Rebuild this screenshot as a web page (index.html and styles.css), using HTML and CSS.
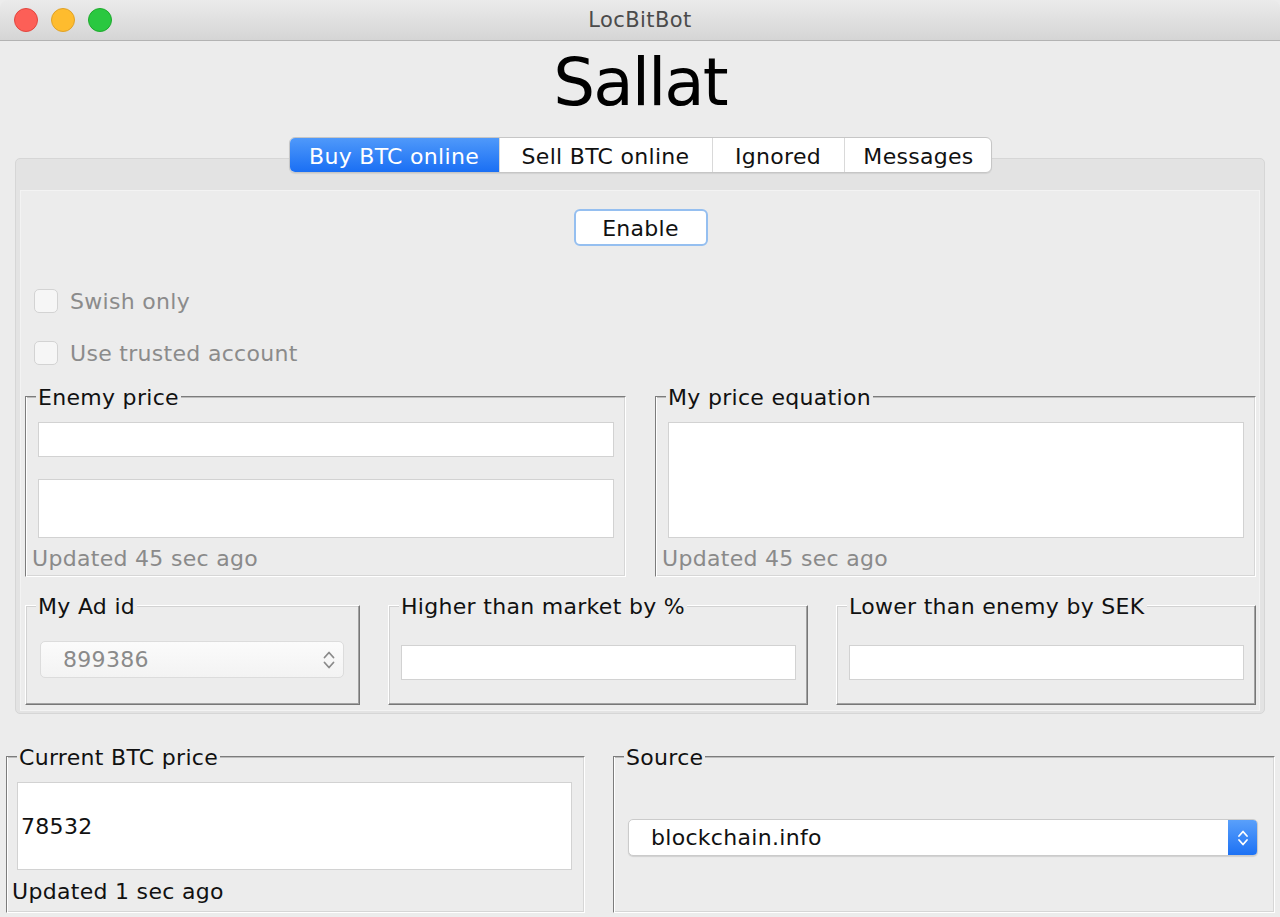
FILE: index.html
```html
<!DOCTYPE html>
<html lang="en">
<head>
<meta charset="utf-8">
<title>LocBitBot</title>
<link rel="stylesheet" href="styles.css">
</head>
<body>
<div class="window">
  <header class="titlebar">
    <div class="lights">
      <span class="light light--red"></span>
      <span class="light light--yellow"></span>
      <span class="light light--green"></span>
    </div>
    <div class="titlebar-text">LocBitBot</div>
  </header>

  <h1 class="app-title">Sallat</h1>

  <nav class="tabs">
    <div class="tab tab--active">Buy BTC online</div>
    <div class="tab">Sell BTC online</div>
    <div class="tab">Ignored</div>
    <div class="tab">Messages</div>
  </nav>

  <section class="tabpane">
    <div class="tabpage">
      <div class="enable-row">
        <button class="btn-enable" type="button">Enable</button>
      </div>

      <div class="checks">
        <label class="check"><span class="check-box"></span><span class="check-label">Swish only</span></label>
        <label class="check"><span class="check-box"></span><span class="check-label">Use trusted account</span></label>
      </div>

      <div class="group-row">
        <fieldset class="group group--lowered">
          <legend class="group-title">Enemy price</legend>
          <div class="field field--short"></div>
          <div class="field field--mid"></div>
          <div class="updated updated--muted">Updated 45 sec ago</div>
        </fieldset>
        <fieldset class="group group--lowered">
          <legend class="group-title">My price equation</legend>
          <div class="field field--tall"></div>
          <div class="updated updated--muted">Updated 45 sec ago</div>
        </fieldset>
      </div>

      <div class="param-row">
        <fieldset class="group group--raised group--combo">
          <legend class="group-title">My Ad id</legend>
          <div class="combo combo--disabled">
            <span class="combo-value">899386</span>
            <svg class="combo-arrows" width="14" height="24" viewBox="0 0 14 24">
              <path d="M2.5 9.5 L7 4.5 L11.5 9.5" fill="none" stroke="#8a8a8a" stroke-width="1.8" stroke-linecap="round" stroke-linejoin="round"/>
              <path d="M2.5 14.5 L7 19.5 L11.5 14.5" fill="none" stroke="#8a8a8a" stroke-width="1.8" stroke-linecap="round" stroke-linejoin="round"/>
            </svg>
          </div>
        </fieldset>
        <fieldset class="group group--raised group--input">
          <legend class="group-title">Higher than market by %</legend>
          <div class="field field--short"></div>
        </fieldset>
        <fieldset class="group group--raised group--input">
          <legend class="group-title">Lower than enemy by SEK</legend>
          <div class="field field--short"></div>
        </fieldset>
      </div>
    </div>
  </section>

  <div class="bottom-row">
    <fieldset class="group group--lowered group--price">
      <legend class="group-title">Current BTC price</legend>
      <div class="field field--price">78532</div>
      <div class="updated updated--dark">Updated 1 sec ago</div>
    </fieldset>
    <fieldset class="group group--lowered group--source">
      <legend class="group-title">Source</legend>
      <div class="combo combo--active">
        <span class="combo-value">blockchain.info</span>
        <span class="combo-button">
          <svg width="14" height="24" viewBox="0 0 14 24">
            <path d="M3 10 L7 5.5 L11 10" fill="none" stroke="#fff" stroke-width="1.8" stroke-linecap="round" stroke-linejoin="round"/>
            <path d="M3 14 L7 18.5 L11 14" fill="none" stroke="#fff" stroke-width="1.8" stroke-linecap="round" stroke-linejoin="round"/>
          </svg>
        </span>
      </div>
    </fieldset>
  </div>
</div>
</body>
</html>
```

FILE: styles.css
```css
* { box-sizing: border-box; }

html, body {
  margin: 0;
  padding: 0;
  background: #ececec;
}

body {
  font-family: "DejaVu Sans", "Liberation Sans", sans-serif;
  font-size: 22px;
  letter-spacing: 0.3px;
  color: #111;
}

.window {
  width: 1280px;
  height: 917px;
  overflow: hidden;
  background: #ececec;
}

/* ---------- title bar ---------- */
.titlebar {
  height: 41px;
  display: flex;
  align-items: center;
  justify-content: center;
  background: linear-gradient(#ebebeb, #d5d5d5);
  border-bottom: 1px solid #b3b3b3;
  border-radius: 8px 8px 0 0;
  position: relative;
}

.lights {
  position: absolute;
  left: 14px;
  top: 8px;
  display: flex;
  gap: 13px;
}

.light {
  width: 24px;
  height: 24px;
  border-radius: 50%;
  display: block;
}
.light--red { background: #fd5f57; border: 1px solid #e2463f; }
.light--yellow { background: #febc2e; border: 1px solid #e0a227; }
.light--green { background: #2ac840; border: 1px solid #1eaa2d; }

.titlebar-text {
  font-size: 21px;
  color: #4b4b4b;
  letter-spacing: 0.4px;
}

/* ---------- big title ---------- */
.app-title {
  margin: 0 0 12px 0;
  height: 84px;
  line-height: 84px;
  text-align: center;
  font-size: 66px;
  font-weight: normal;
  letter-spacing: -2px;
  color: #000;
}

/* ---------- tabs ---------- */
.tabs {
  position: relative;
  z-index: 1;
  display: grid;
  grid-template-columns: 209px 213px 132px 149px;
  width: 703px;
  height: 36px;
  margin: 0 auto -15px auto;
  background: #fff;
  border: 1px solid #c6c6c6;
  border-radius: 6px;
  box-shadow: 0 1px 1px rgba(0,0,0,0.08);
  overflow: hidden;
}

.tab {
  display: flex;
  align-items: center;
  justify-content: center;
  padding-top: 2px;
  color: #111;
  border-left: 1px solid #d9d9d9;
}
.tab:first-child { border-left: none; }

.tab--active {
  background: linear-gradient(#4f99fa, #1a6ff4);
  color: #fff;
}

/* ---------- tab pane ---------- */
.tabpane {
  margin: 0 15px;
  border: 1px solid #d6d6d6;
  border-radius: 5px;
  background: #e3e3e3;
  padding: 31px 4px 2px 4px;
}

.tabpage {
  background: #ececec;
  border: 1px solid #f3f3f3;
  padding: 18px 3px 5px 4px;
}

.enable-row {
  display: flex;
  justify-content: center;
}

.btn-enable {
  width: 134px;
  height: 37px;
  font-family: inherit;
  font-size: 22px;
  letter-spacing: 0.3px;
  color: #111;
  background: #fff;
  border: 2px solid #95bff0;
  border-radius: 6px;
  padding: 1px 0 0 0;
}

/* ---------- checkboxes ---------- */
.checks {
  margin: 43px 0 0 9px;
  display: flex;
  flex-direction: column;
  gap: 28px;
}

.check {
  display: flex;
  align-items: center;
  height: 24px;
  gap: 12px;
}

.check-box {
  width: 24px;
  height: 24px;
  border: 1px solid #d3d3d3;
  border-radius: 5px;
  background: #f6f6f6;
}

.check-label {
  color: #8b8b8b;
}

/* ---------- titled (etched) groups ---------- */
.group {
  --pl: 12px;
  margin: 0;
  min-width: 0;
  padding: 11px 11px 4px var(--pl);
}

.group--lowered {
  border-top: 1px solid #7c7c7c;
  border-left: 1px solid #7c7c7c;
  border-right: 1px solid #fff;
  border-bottom: 1px solid #fff;
  box-shadow: inset 1px 0 0 #fff, inset 0 1px 0 #bdbdbd, inset -1px -1px 0 #d6d6d6;
}

.group--raised {
  border-top: 1px solid #fff;
  border-left: 1px solid #fff;
  border-right: 1px solid #777;
  border-bottom: 1px solid #777;
  box-shadow: inset -1px -1px 0 #a2a2a2, inset 1px 1px 0 #d2d2d2;
}

.group-title {
  padding: 4px 2px 0 2px;
  margin-left: calc(10px - var(--pl));
  line-height: 26px;
  background: #ececec;
  color: #111;
}

.field {
  background: #fff;
  border: 1px solid #d2d2d2;
}

.field--short { height: 35px; }
.field--mid { height: 59px; margin-top: 22px; }
.field--tall { height: 116px; }

.updated {
  margin: 8px 0 0 -6px;
  line-height: 26px;
}
.updated--muted { color: #8a8a8a; }
.updated--dark { color: #111; margin: 9px 0 0 -5px; }

.group-row {
  margin-top: 16px;
  display: grid;
  grid-template-columns: 1fr 1fr;
  gap: 29px;
}

.param-row {
  margin-top: 13px;
  display: grid;
  grid-template-columns: 335px 1fr 1fr;
  gap: 28px;
}

.group--input { padding: 25px 11px 24px 12px; }
.group--combo { --pl: 14px; padding: 21px 15px 26px var(--pl); }

/* ---------- combo boxes ---------- */
.combo {
  height: 37px;
  display: flex;
  align-items: center;
  border-radius: 5px;
}

.combo--disabled {
  background: linear-gradient(#fbfbfb, #f3f3f3);
  border: 1px solid #dcdcdc;
  padding: 0 7px 0 22px;
  justify-content: space-between;
  color: #8a8a8a;
}

.combo--active {
  background: #fff;
  border: 1px solid #cbcbcb;
  box-shadow: 0 1px 1px rgba(0,0,0,0.12);
  padding-left: 22px;
  overflow: hidden;
}

.combo--active .combo-value {
  flex: 1;
  color: #111;
}

.combo-button {
  width: 30px;
  height: 37px;
  margin: -1px -1px -1px 0;
  display: flex;
  align-items: center;
  justify-content: center;
  background: linear-gradient(#5ba1fb, #1b70f4);
  border-radius: 0 5px 5px 0;
}

/* ---------- bottom area ---------- */
.bottom-row {
  margin: 27px 5px 0 6px;
  display: grid;
  grid-template-columns: 579px 1fr;
  gap: 28px;
}

.group--price { --pl: 10px; padding: 11px 12px 7px var(--pl); }

.field--price {
  height: 88px;
  display: flex;
  align-items: center;
  padding-left: 3px;
  color: #111;
}

.group--source { --pl: 14px; padding: 48px 16px 0 var(--pl); }
```
